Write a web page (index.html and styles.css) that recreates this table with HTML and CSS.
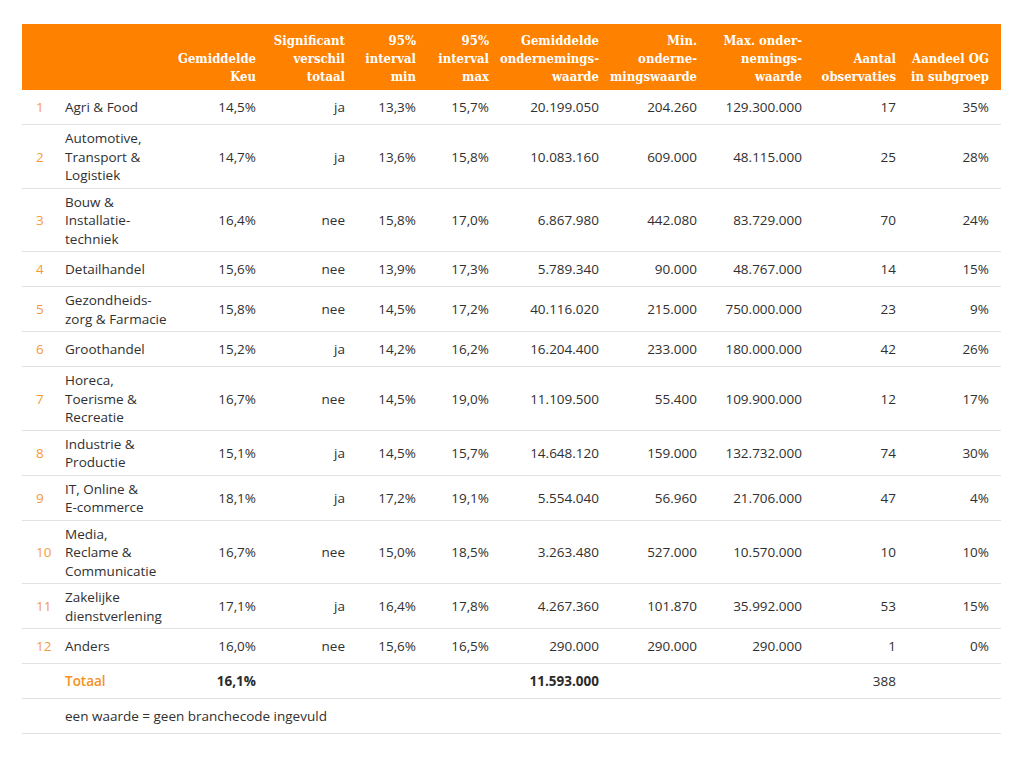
FILE: index.html
```html
<!DOCTYPE html>
<html lang="nl">
<head>
<meta charset="utf-8">
<title>Keu per branche</title>
<link rel="stylesheet" href="styles.css">
</head>
<body>
<div class="wrap">
<table class="data">
  <colgroup>
    <col class="c-nr"><col class="c-name"><col class="c-keu"><col class="c-sig"><col class="c-min"><col class="c-max"><col class="c-gem"><col class="c-mino"><col class="c-maxo"><col class="c-aantal"><col class="c-aandeel">
  </colgroup>
  <thead>
    <tr>
      <th></th>
      <th></th>
      <th><div class="h"><span>Gemiddelde</span><span>Keu</span></div></th>
      <th><div class="h"><span>Significant</span><span>verschil</span><span>totaal</span></div></th>
      <th><div class="h"><span>95%</span><span>interval</span><span>min</span></div></th>
      <th><div class="h"><span>95%</span><span>interval</span><span>max</span></div></th>
      <th><div class="h"><span>Gemiddelde</span><span>ondernemings-</span><span>waarde</span></div></th>
      <th><div class="h"><span>Min.</span><span>onderne-</span><span>mingswaarde</span></div></th>
      <th><div class="h"><span>Max. onder-</span><span>nemings-</span><span>waarde</span></div></th>
      <th><div class="h"><span>Aantal</span><span>observaties</span></div></th>
      <th><div class="h"><span>Aandeel OG</span><span>in subgroep</span></div></th>
    </tr>
  </thead>
  <tbody>
    <tr><td class="nr">1</td><td class="name">Agri &amp; Food</td><td>14,5%</td><td>ja</td><td>13,3%</td><td>15,7%</td><td>20.199.050</td><td>204.260</td><td>129.300.000</td><td>17</td><td>35%</td></tr>
    <tr><td class="nr">2</td><td class="name">Automotive,<br>Transport &amp;<br>Logistiek</td><td>14,7%</td><td>ja</td><td>13,6%</td><td>15,8%</td><td>10.083.160</td><td>609.000</td><td>48.115.000</td><td>25</td><td>28%</td></tr>
    <tr><td class="nr">3</td><td class="name">Bouw &amp;<br>Installatie-<br>techniek</td><td>16,4%</td><td>nee</td><td>15,8%</td><td>17,0%</td><td>6.867.980</td><td>442.080</td><td>83.729.000</td><td>70</td><td>24%</td></tr>
    <tr><td class="nr">4</td><td class="name">Detailhandel</td><td>15,6%</td><td>nee</td><td>13,9%</td><td>17,3%</td><td>5.789.340</td><td>90.000</td><td>48.767.000</td><td>14</td><td>15%</td></tr>
    <tr><td class="nr">5</td><td class="name">Gezondheids-<br>zorg &amp; Farmacie</td><td>15,8%</td><td>nee</td><td>14,5%</td><td>17,2%</td><td>40.116.020</td><td>215.000</td><td>750.000.000</td><td>23</td><td>9%</td></tr>
    <tr><td class="nr">6</td><td class="name">Groothandel</td><td>15,2%</td><td>ja</td><td>14,2%</td><td>16,2%</td><td>16.204.400</td><td>233.000</td><td>180.000.000</td><td>42</td><td>26%</td></tr>
    <tr><td class="nr">7</td><td class="name">Horeca,<br>Toerisme &amp;<br>Recreatie</td><td>16,7%</td><td>nee</td><td>14,5%</td><td>19,0%</td><td>11.109.500</td><td>55.400</td><td>109.900.000</td><td>12</td><td>17%</td></tr>
    <tr><td class="nr">8</td><td class="name">Industrie &amp;<br>Productie</td><td>15,1%</td><td>ja</td><td>14,5%</td><td>15,7%</td><td>14.648.120</td><td>159.000</td><td>132.732.000</td><td>74</td><td>30%</td></tr>
    <tr><td class="nr">9</td><td class="name">IT, Online &amp;<br>E-commerce</td><td>18,1%</td><td>ja</td><td>17,2%</td><td>19,1%</td><td>5.554.040</td><td>56.960</td><td>21.706.000</td><td>47</td><td>4%</td></tr>
    <tr><td class="nr">10</td><td class="name">Media,<br>Reclame &amp;<br>Communicatie</td><td>16,7%</td><td>nee</td><td>15,0%</td><td>18,5%</td><td>3.263.480</td><td>527.000</td><td>10.570.000</td><td>10</td><td>10%</td></tr>
    <tr><td class="nr">11</td><td class="name">Zakelijke<br>dienstverlening</td><td>17,1%</td><td>ja</td><td>16,4%</td><td>17,8%</td><td>4.267.360</td><td>101.870</td><td>35.992.000</td><td>53</td><td>15%</td></tr>
    <tr><td class="nr">12</td><td class="name">Anders</td><td>16,0%</td><td>nee</td><td>15,6%</td><td>16,5%</td><td>290.000</td><td>290.000</td><td>290.000</td><td>1</td><td>0%</td></tr>
    <tr class="total"><td class="nr"></td><td class="name">Totaal</td><td class="b">16,1%</td><td></td><td></td><td></td><td class="b">11.593.000</td><td></td><td></td><td>388</td><td></td></tr>
    <tr class="note"><td class="nr"></td><td class="name" colspan="10">een waarde = geen branchecode ingevuld</td></tr>
  </tbody>
</table>
</div>
</body>
</html>
```
FILE: styles.css
```css
html, body {
  margin: 0;
  padding: 0;
  background: #ffffff;
}

body {
  font-family: "Open Sans", "Liberation Sans", sans-serif;
  color: #333333;
}

.wrap {
  padding: 24px 0 0 22px;
}

.data {
  width: 979px;
  table-layout: fixed;
  border-collapse: separate;
  border-spacing: 0;
  font-size: 13.5px;
}

.c-nr { width: 31px; }
.c-name { width: 117px; }
.c-keu { width: 98px; }
.c-sig { width: 89px; }
.c-min { width: 71px; }
.c-max { width: 73px; }
.c-gem { width: 110px; }
.c-mino { width: 98px; }
.c-maxo { width: 105px; }
.c-aantal { width: 94px; }
.c-aandeel { width: 93px; }

.data th {
  background: #fe8100;
  color: #ffffff;
  font-family: "DejaVu Serif", "Liberation Serif", serif;
  font-stretch: condensed;
  font-weight: bold;
  font-size: 13px;
  line-height: 18px;
  padding: 8px 12px 4px 0;
  height: 54px;
  vertical-align: bottom;
  text-align: right;
  white-space: nowrap;
}

.h {
  display: flex;
  flex-direction: column;
  align-items: flex-end;
}

.data td {
  padding: 4px 12px 3px 0;
  line-height: 18.5px;
  height: 27px;
  border-bottom: 1.5px solid #e2e2e2;
  vertical-align: middle;
  text-align: right;
  white-space: nowrap;
  color: #303030;
}

.data td.nr {
  text-align: left;
  padding-left: 14px;
  padding-right: 0;
  color: #f59a3a;
}

.data td.name {
  text-align: left;
  padding-left: 12px;
}

.data td.b {
  font-weight: 700;
  color: #2b2b2b;
}

.data .total td.name {
  color: #f7901e;
  font-weight: 600;
}
```
